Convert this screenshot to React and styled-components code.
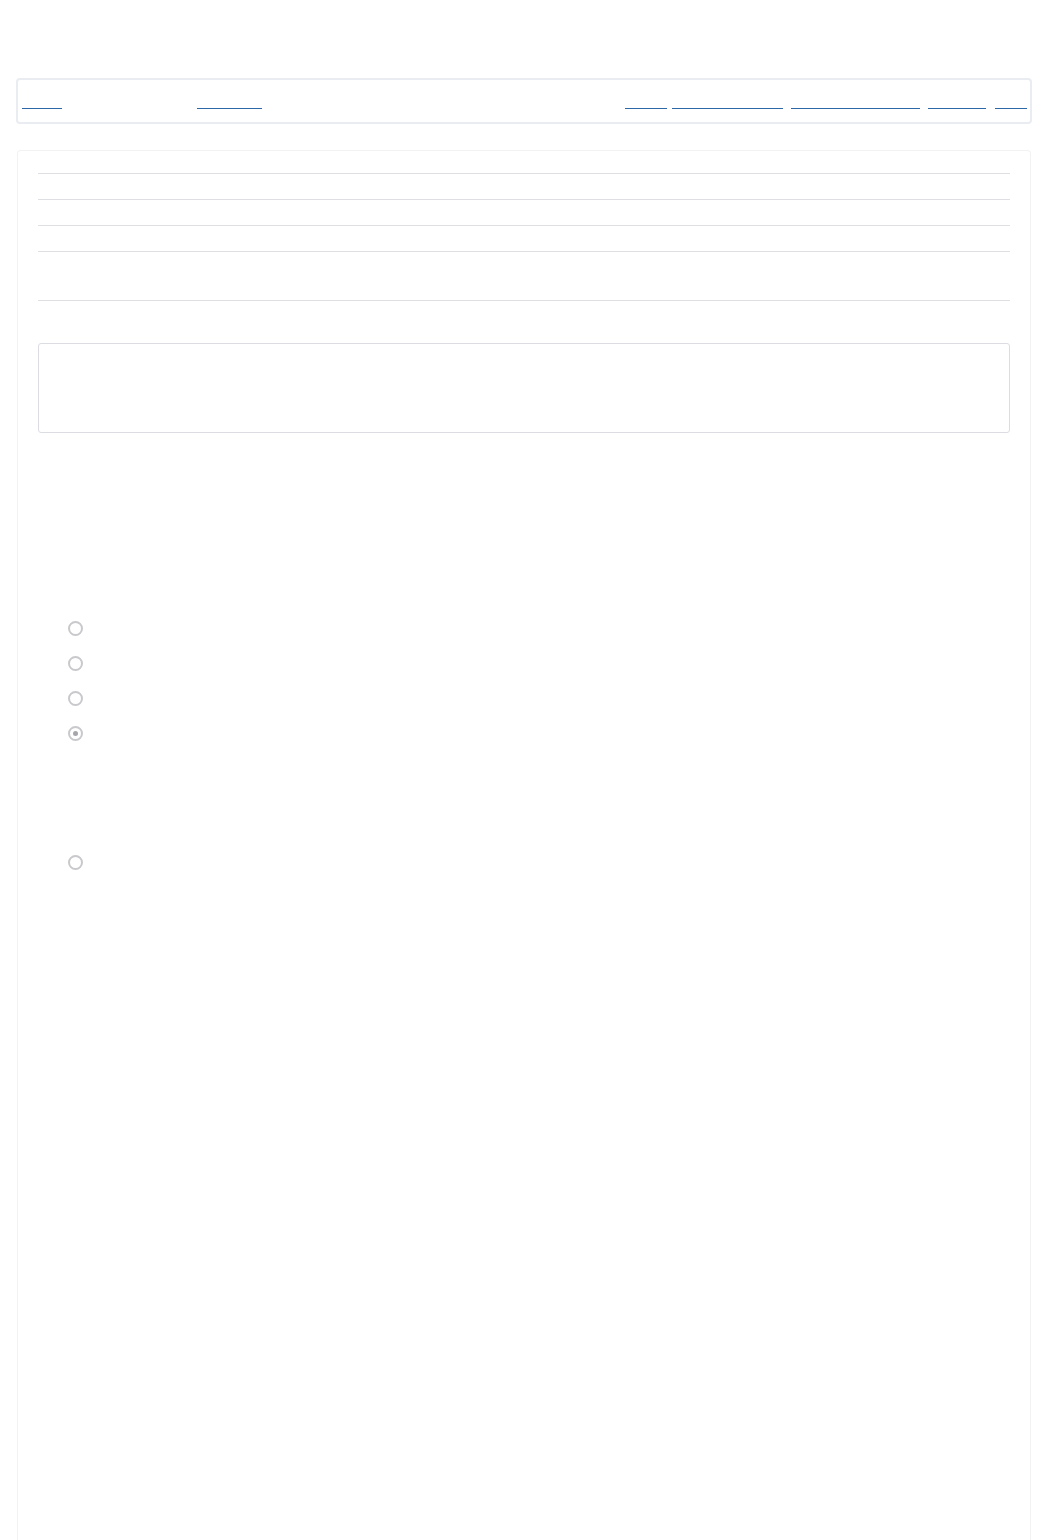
import styled, { createGlobalStyle } from "styled-components";

const GlobalStyle = createGlobalStyle`
  html, body {
    margin: 0;
    padding: 0;
    background: #ffffff;
    font-family: "Liberation Sans", Arial, sans-serif;
  }
`;

const Page = styled.div`
  padding: 78px 16px 0 16px;
  min-height: 1540px;
  box-sizing: border-box;
  display: flex;
  flex-direction: column;
  gap: 26px;
`;

const NavBar = styled.nav`
  height: 46px;
  box-sizing: border-box;
  border: 2px solid #e9ecf0;
  border-radius: 4px;
  display: flex;
  align-items: flex-start;
  justify-content: space-between;
  padding: 0 3px 0 4px;
`;

const NavGroup = styled.div`
  display: flex;
`;

const NavLink = styled.a`
  display: inline-block;
  width: ${(p) => p.$w}px;
  margin-left: ${(p) => p.$ml || 0}px;
  margin-top: 14px;
  height: 14px;
  border-bottom: 1.5px solid #2c68a8;
  color: transparent;
  font-size: 11px;
  line-height: 14px;
  white-space: nowrap;
  text-decoration: none;
`;

const Panel = styled.main`
  flex: 1;
  border: 1px solid #f1f2f4;
  border-bottom: none;
  border-radius: 4px 4px 0 0;
  margin: 0 1px 0 1px;
  padding: 22px 20px 0 20px;
`;

const Table = styled.div`
  border-bottom: 1px solid #dedfe3;
`;

const Row = styled.div`
  height: ${(p) => p.$h}px;
  box-sizing: border-box;
  border-top: 1px solid #dedfe3;
  color: transparent;
  font-size: 13px;
`;

const NoteBox = styled.div`
  margin-top: 42px;
  height: 90px;
  box-sizing: border-box;
  border: 1px solid #dcdde2;
  border-radius: 3px;
  color: transparent;
`;

const Options = styled.div`
  margin-top: ${(p) => p.$mt}px;
  padding-left: 30px;
  display: flex;
  flex-direction: column;
  gap: 20px;
`;

const Option = styled.label`
  display: flex;
  align-items: center;
  gap: 8px;
  height: 15px;
  color: transparent;
  font-size: 13px;
`;

const Radio = styled.span`
  width: 15px;
  height: 15px;
  box-sizing: border-box;
  border-radius: 50%;
  border: 2px solid #c9c9cd;
  display: flex;
  align-items: center;
  justify-content: center;
  &::after {
    content: "";
    width: 5px;
    height: 5px;
    border-radius: 50%;
    background: ${(p) => (p.$checked ? "#a6a6ab" : "transparent")};
  }
`;

const leftLinks = [
  { w: 40, label: "Home" },
  { w: 65, label: "Browse", ml: 135 },
];

const rightLinks = [
  { w: 42, label: "Help" },
  { w: 111, label: "Preferences", ml: 5 },
  { w: 129, label: "Account settings", ml: 8 },
  { w: 58, label: "Profile", ml: 8 },
  { w: 32, label: "Exit", ml: 9 },
];

export default function App() {
  return (
    <>
      <GlobalStyle />
      <Page>
        <NavBar>
          <NavGroup>
            {leftLinks.map((l) => (
              <NavLink key={l.label} $w={l.w} $ml={l.ml} href="#">
                {l.label}
              </NavLink>
            ))}
          </NavGroup>
          <NavGroup>
            {rightLinks.map((l) => (
              <NavLink key={l.label} $w={l.w} $ml={l.ml} href="#">
                {l.label}
              </NavLink>
            ))}
          </NavGroup>
        </NavBar>
        <Panel>
          <Table>
            <Row $h={26}>Name</Row>
            <Row $h={26}>Type</Row>
            <Row $h={26}>Status</Row>
            <Row $h={49}>Description</Row>
          </Table>
          <NoteBox>Notes</NoteBox>
          <Options $mt={188}>
            <Option><Radio />Option one</Option>
            <Option><Radio />Option two</Option>
            <Option><Radio />Option three</Option>
            <Option><Radio $checked />Option four</Option>
          </Options>
          <Options $mt={114}>
            <Option><Radio />Option five</Option>
          </Options>
        </Panel>
      </Page>
    </>
  );
}
